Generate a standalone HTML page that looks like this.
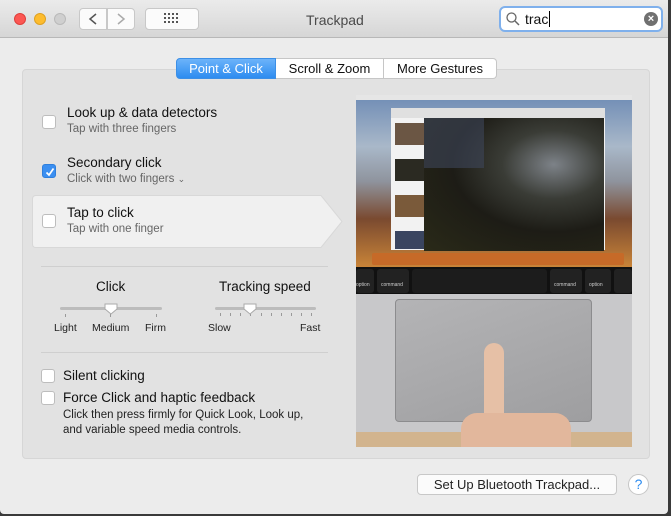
<!DOCTYPE html>
<html><head><style>
*{box-sizing:border-box;margin:0;padding:0}
body{width:671px;height:516px;background:#3a3a3a;font-family:"Liberation Sans",sans-serif;position:relative;overflow:hidden}
.win{position:absolute;left:0;top:0;width:668px;height:514px;background:#ececec;border-radius:0 0 4px 4px}
.tb{position:absolute;left:0;top:0;width:668px;height:38px;background:linear-gradient(#ebebeb,#d6d6d6);border-bottom:1px solid #b8b8b8}
.dot{position:absolute;top:13px;width:12px;height:12px;border-radius:50%}
.btn{position:absolute;background:#fbfbfb;border:1px solid #c8c8c8;border-radius:4px}
.a{position:absolute;font-size:13px;color:#111;white-space:nowrap}
.s{position:absolute;font-size:11.5px;color:#666;white-space:nowrap}
.cb{position:absolute;width:14px;height:14px;background:#fff;border:1px solid #bdbdbd;border-radius:3px}
.panel{position:absolute;left:22px;top:69px;width:628px;height:390px;background:#e2e2e2;border:1px solid #d6d6d6;border-radius:4px}
.tab{position:absolute;top:58px;height:21px;font-size:13px;line-height:20px;text-align:center;background:#fff;border:1px solid #c6c6c6;color:#111}
.hr{position:absolute;left:41px;width:287px;height:1px;background:#cfcfcf}
.track{position:absolute;height:3px;background:#bcbcbc;border-radius:2px}
.tk{position:absolute;width:1px;height:3px;background:#999}
.sm{position:absolute;font-size:10.5px;color:#222}
</style></head><body>
<div class="win">
<div class="tb"></div>
<div class="dot" style="left:14px;background:#fc5753;border:1px solid #de3f3b"></div>
<div class="dot" style="left:34px;background:#fdbc2e;border:1px solid #dea122"></div>
<div class="dot" style="left:54px;background:#cfcfcf;border:1px solid #b9b9b9"></div>
<div class="btn" style="left:79px;top:8px;width:28px;height:22px;border-radius:4px 0 0 4px"></div>
<div class="btn" style="left:107px;top:8px;width:28px;height:22px;border-radius:0 4px 4px 0"></div>
<svg style="position:absolute;left:79px;top:8px" width="56" height="22"><path d="M17 6 L11 11 L17 16" stroke="#555" stroke-width="1.5" fill="none"/><path d="M39 6 L45 11 L39 16" stroke="#aaa" stroke-width="1.5" fill="none"/></svg>
<div class="btn" style="left:145px;top:8px;width:54px;height:22px"></div>
<svg style="position:absolute;left:164px;top:13px" width="16" height="12"><g fill="#555"><rect x="0" y="0" width="2" height="2"/><rect x="4" y="0" width="2" height="2"/><rect x="8" y="0" width="2" height="2"/><rect x="12" y="0" width="2" height="2"/><rect x="0" y="4" width="2" height="2"/><rect x="4" y="4" width="2" height="2"/><rect x="8" y="4" width="2" height="2"/><rect x="12" y="4" width="2" height="2"/><rect x="0" y="8" width="2" height="2"/><rect x="4" y="8" width="2" height="2"/><rect x="8" y="8" width="2" height="2"/><rect x="12" y="8" width="2" height="2"/></g></svg>
<div class="a" style="left:306px;top:12px;font-size:14px;color:#4a4a4a">Trackpad</div>
<div style="position:absolute;left:499px;top:6px;width:164px;height:26px;border:2px solid #7fb0ec;border-radius:6px;background:#fff"></div>
<svg style="position:absolute;left:506px;top:12px" width="14" height="14"><circle cx="5.5" cy="5.5" r="4.5" stroke="#666" stroke-width="1.3" fill="none"/><path d="M9 9 L13 13" stroke="#666" stroke-width="1.5"/></svg>
<div class="a" style="left:525px;top:11px;font-size:14px">trac<span style="border-left:1px solid #000;margin-left:1px"></span></div>
<div style="position:absolute;left:644px;top:12px;width:14px;height:14px;border-radius:50%;background:#707070;color:#fff;font-size:11px;line-height:14px;text-align:center;font-weight:bold">×</div>

<div class="panel"></div>
<div class="tab" style="left:176px;width:100px;background:linear-gradient(#6cb3fa,#2d8cf0);color:#fff;border-color:#3c8fe6;border-radius:4px 0 0 4px">Point &amp; Click</div>
<div class="tab" style="left:276px;width:108px;border-left:none">Scroll &amp; Zoom</div>
<div class="tab" style="left:384px;width:113px;border-left:none;border-radius:0 4px 4px 0">More Gestures</div>

<div class="cb" style="left:42px;top:115px"></div>
<div class="a" style="left:67px;top:105px;font-size:13.5px">Look up &amp; data detectors</div>
<div class="s" style="left:67px;top:123px">Tap with three fingers</div>
<div class="cb" style="left:42px;top:164px;background:#3b8ff1;border-color:#2f7fdc"></div>
<svg style="position:absolute;left:44px;top:166px" width="12" height="12"><path d="M2.5 6.5 L5 9 L9.5 2.5" stroke="#fff" stroke-width="1.7" fill="none"/></svg>
<div class="a" style="left:67px;top:155px;font-size:13.5px">Secondary click</div>
<div class="s" style="left:67px;top:173px">Click with two fingers <span style="font-size:9px">⌄</span></div>
<svg style="position:absolute;left:32px;top:195px" width="312" height="54"><path d="M4 0.5 H289 L310 26.5 L289 52.5 H4 Q0.5 52.5 0.5 49 V4 Q0.5 0.5 4 0.5Z" fill="#f0f0f0" stroke="#d8d8d8"/></svg>
<div class="cb" style="left:42px;top:214px"></div>
<div class="a" style="left:67px;top:205px;font-size:13.5px">Tap to click</div>
<div class="s" style="left:67px;top:223px">Tap with one finger</div>

<div class="hr" style="top:266px"></div>
<div class="a" style="left:96px;top:279px;font-size:13.5px">Click</div>
<div class="track" style="left:60px;top:307px;width:102px"></div>
<div class="tk" style="left:65px;top:314px"></div><div class="tk" style="left:110px;top:314px"></div><div class="tk" style="left:156px;top:314px"></div>
<svg style="position:absolute;left:104px;top:303px" width="14" height="12"><path d="M1 1 H13 V6 L7 11 L1 6Z" fill="#fff" stroke="#aaa"/></svg>
<div class="sm" style="left:54px;top:322px">Light</div><div class="sm" style="left:92px;top:322px">Medium</div><div class="sm" style="left:145px;top:322px">Firm</div>
<div class="a" style="left:219px;top:279px;font-size:13.5px">Tracking speed</div>
<div class="track" style="left:215px;top:307px;width:101px"></div>
<svg style="position:absolute;left:215px;top:313px" width="102" height="4"><g fill="#999"><rect x="5" width="1" height="3"/><rect x="15" width="1" height="3"/><rect x="25" width="1" height="3"/><rect x="35" width="1" height="3"/><rect x="46" width="1" height="3"/><rect x="56" width="1" height="3"/><rect x="66" width="1" height="3"/><rect x="76" width="1" height="3"/><rect x="86" width="1" height="3"/><rect x="96" width="1" height="3"/></g></svg>
<svg style="position:absolute;left:243px;top:303px" width="14" height="12"><path d="M1 1 H13 V6 L7 11 L1 6Z" fill="#fff" stroke="#aaa"/></svg>
<div class="sm" style="left:208px;top:322px">Slow</div><div class="sm" style="left:300px;top:322px">Fast</div>
<div class="hr" style="top:352px"></div>

<div class="cb" style="left:41px;top:369px"></div>
<div class="a" style="left:63px;top:368px;font-size:13.5px">Silent clicking</div>
<div class="cb" style="left:41px;top:391px"></div>
<div class="a" style="left:63px;top:390px;font-size:13.5px">Force Click and haptic feedback</div>
<div class="s" style="left:63px;top:409px;color:#222">Click then press firmly for Quick Look, Look up,</div>
<div class="s" style="left:63px;top:424px;color:#222">and variable speed media controls.</div>

<div style="position:absolute;left:356px;top:95px;width:276px;height:352px;overflow:hidden;background:#c8c8ca">
 <div style="position:absolute;left:0;top:0;width:276px;height:172px;background:linear-gradient(180deg,#6f8cb5 0%,#a9b8c9 30%,#8f949e 50%,#7a4a30 72%,#c98438 100%)"></div>
 <div style="position:absolute;left:0;top:0;width:276px;height:5px;background:#e6e6e6"></div>
 <div style="position:absolute;left:35px;top:13px;width:214px;height:142px;background:#f2f2f2"></div>
 <div style="position:absolute;left:35px;top:13px;width:214px;height:10px;background:#e0e0e0"></div>
 <div style="position:absolute;left:39px;top:28px;width:30px;height:22px;background:#6b5644"></div>
 <div style="position:absolute;left:39px;top:64px;width:30px;height:22px;background:#2b2a22"></div>
 <div style="position:absolute;left:39px;top:100px;width:30px;height:22px;background:#7a5a3a"></div>
 <div style="position:absolute;left:39px;top:136px;width:30px;height:18px;background:#3a4560"></div>
 <div style="position:absolute;left:68px;top:23px;width:180px;height:133px;background:radial-gradient(ellipse at 72% 35%,#7d8288 0%,#3a3c36 28%,#1d1c16 55%,#2a2a18 100%)"></div>
 <div style="position:absolute;left:68px;top:23px;width:60px;height:50px;background:#3d465a;opacity:.6"></div>
 <div style="position:absolute;left:16px;top:158px;width:252px;height:12px;background:#c66a28;border-radius:2px"></div>
 <div style="position:absolute;left:0;top:172px;width:276px;height:27px;background:#111"></div>
 <div style="position:absolute;left:0;top:174px;width:18px;height:24px;background:#222;border-radius:3px;color:#ccc;font-size:5px;padding-top:13px">option</div>
 <div style="position:absolute;left:21px;top:174px;width:32px;height:24px;background:#222;border-radius:3px;color:#ccc;font-size:5px;padding:13px 0 0 4px">command</div>
 <div style="position:absolute;left:56px;top:174px;width:135px;height:24px;background:#1c1c1c;border-radius:3px"></div>
 <div style="position:absolute;left:194px;top:174px;width:32px;height:24px;background:#222;border-radius:3px;color:#ccc;font-size:5px;padding:13px 0 0 4px">command</div>
 <div style="position:absolute;left:229px;top:174px;width:26px;height:24px;background:#222;border-radius:3px;color:#ccc;font-size:5px;padding:13px 0 0 4px">option</div>
 <div style="position:absolute;left:258px;top:174px;width:18px;height:24px;background:#222;border-radius:3px"></div>
 <div style="position:absolute;left:39px;top:204px;width:197px;height:123px;background:linear-gradient(160deg,#b4b4b6,#9e9ea0);border:1px solid #8c8c8e;border-radius:4px"></div>
 <div style="position:absolute;left:0;top:337px;width:276px;height:15px;background:#d2b48e"></div>
 <div style="position:absolute;left:128px;top:248px;width:20px;height:110px;background:#e6c0a6;border-radius:10px 10px 0 0"></div>
 <div style="position:absolute;left:105px;top:318px;width:110px;height:40px;background:#e2b79c;border-radius:16px 16px 0 0"></div>
</div>

<div class="btn" style="left:417px;top:474px;width:200px;height:21px;font-size:13px;line-height:19px;text-align:center;color:#222;border-radius:4px">Set Up Bluetooth Trackpad...</div>
<div style="position:absolute;left:628px;top:474px;width:21px;height:21px;border-radius:50%;background:#fff;border:1px solid #c6c6c6;color:#2d8cf0;font-size:14px;line-height:19px;text-align:center">?</div>
</div>
</body></html>
